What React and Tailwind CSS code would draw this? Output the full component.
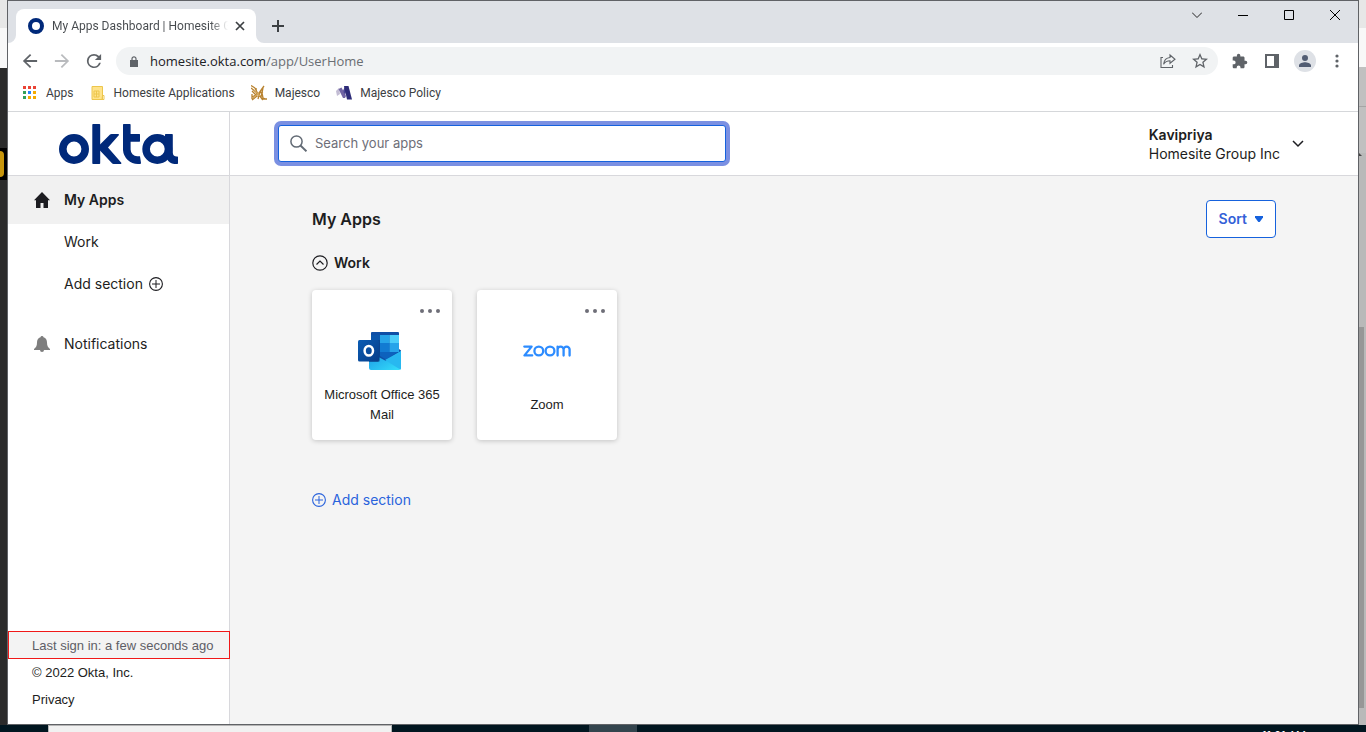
import React from 'react';

const chromeFont = "font-['Open_Sans','Noto_Sans',sans-serif]";

function OktaLogo() {
  return (
    <svg viewBox="0 0 119 40" className="h-10 w-[119px]" fill="#00297a" role="img" aria-label="Okta">
      <circle cx="15" cy="25" r="11.2" fill="none" stroke="#00297a" strokeWidth="7.6" />
      <rect x="33.3" y="0" width="7.9" height="40" rx="0.8" />
      <path d="M40.5 21 L51 10.6 Q51.7 10 52.6 10 H59.6 L60 11 L49 23.5 L62.5 39 L62 40 H54.5 Q53.5 40 53 39.3 L40.5 26z" />
      <path d="M64.6 0 H71 L71.6 .6 V10 H80.6 L81 10.5 V17.2 L80.5 17.7 H71.6 V25.5 a6.6 6.6 0 0 0 6.6 6.7 H81 L82 39 L81.5 40 H79 A15 15 0 0 1 64 26 V.6z" />
      <circle cx="98.3" cy="25" r="11.2" fill="none" stroke="#00297a" strokeWidth="7.6" />
      <path d="M106 13 V10.6 L106.6 10 H113.2 L113.8 10.6 V28.5 a4 4 0 0 0 4 4 H118.6 L119 33 V39.4 L118.4 40 H116.5 a9 9 0 0 1 -8.5 -5 z" />
    </svg>
  );
}

function OutlookLogo() {
  return (
    <svg viewBox="0 0 48 38" className="h-[38px] w-12" aria-hidden="true">
      <defs>
        <linearGradient id="ol-flap" x1="0" y1="0" x2="1" y2="1">
          <stop offset="0" stopColor="#1a94e4" />
          <stop offset="1" stopColor="#35e0fb" />
        </linearGradient>
        <linearGradient id="ol-tile" x1="0" y1="0" x2="1" y2="1">
          <stop offset="0" stopColor="#0a5cb4" />
          <stop offset="1" stopColor="#083d88" />
        </linearGradient>
      </defs>
      <path d="M14 0 H40 Q41 0 41 1 V17 L43 18.500 V22 L28 31 L13 27 V1 Q13 0 14 0z" fill="#0f4fa6" />
      <path d="M13 3h9v8h-9z" fill="#0a56ad" />
      <path d="M22 3h9.500v8H22z" fill="#27a4e8" />
      <path d="M31.500 3H41v8h-9.500z" fill="#4bcdfa" />
      <path d="M22 11h9.500v9H22z" fill="#127bd2" />
      <path d="M31.500 11H41v9h-9.500z" fill="#26a3ea" />
      <path d="M22 20 H40 L31 25.500 L28 27.500 L22 24z" fill="#0d62bd" />
      <path d="M11 20 L28 29 L43 19 V36 Q43 38 41 38 H13 Q11 38 11 36z" fill="url(#ol-flap)" />
      <path d="M27 28 L43 19 V36 Q43 37 42.300 37.500z" fill="#28b8f0" />
      <path d="M14 8 H22 V28 Q22 30 20 30 H11 V20z" fill="#063878" opacity=".5" />
      <rect x="0" y="8" width="21" height="21.500" rx="1.500" fill="url(#ol-tile)" />
      <ellipse cx="10.800" cy="18.700" rx="4.200" ry="4.800" fill="none" stroke="#fff" strokeWidth="2.500" />
    </svg>
  );
}

function ZoomLogo() {
  return (
    <svg viewBox="0 0 48 12" className="h-3 w-12" fill="none" stroke="#2d8cff" strokeWidth="2.300" strokeLinecap="round" strokeLinejoin="round" role="img" aria-label="Zoom">
      <path d="M1.300 1.600 H8.600 L1.500 10.400 H9.200" />
      <circle cx="15.800" cy="6" r="4.400" />
      <circle cx="27" cy="6" r="4.400" />
      <path d="M34.600 10.600 V4.600 a3 3 0 0 1 6 0 V10.600 M40.600 4.600 a3 3 0 0 1 6 0 V10.600 M34.600 4.600 V1.600" />
    </svg>
  );
}

function PlusCircle({ size }) {
  return (
    <svg viewBox="0 0 14 14" className={size} fill="none" stroke="currentColor" aria-hidden="true">
      <circle cx="7" cy="7" r="6.400" strokeWidth="1.100" />
      <path d="M7 3v8M3 7h8" />
    </svg>
  );
}

function TitleBar() {
  return (
    <div className="flex h-[42px] shrink-0 items-stretch bg-[#dee1e6] pl-2 pt-2">
      <div className="relative flex w-60 items-center rounded-t-lg bg-white pl-3 pr-2">
        <svg viewBox="0 0 8 8" className="absolute -left-2 bottom-0 size-2" aria-hidden="true"><path d="M8 0v8H0a8 8 0 0 0 8-8" fill="#fff" /></svg>
        <svg viewBox="0 0 8 8" className="absolute -right-2 bottom-0 size-2" aria-hidden="true"><path d="M0 0v8h8a8 8 0 0 1-8-8" fill="#fff" /></svg>
        <svg viewBox="0 0 16 16" className="size-4 shrink-0" aria-hidden="true"><circle cx="8" cy="8" r="6" fill="none" stroke="#00297a" strokeWidth="4" /></svg>
        <span className="ml-2 mr-1 flex-1 overflow-hidden whitespace-nowrap bg-linear-to-r from-[#45494d] from-90% to-[#45494d]/0 bg-clip-text font-['Roboto',sans-serif] text-xs text-transparent">My Apps Dashboard | Homesite Group</span>
        <button type="button" aria-label="Close tab" className="flex size-4 items-center justify-center">
          <svg viewBox="0 0 8 8" className="size-2 overflow-visible" stroke="#3c4043" strokeWidth="1.700"><path d="M0 0l8 8M8 0L0 8" /></svg>
        </button>
      </div>
      <button type="button" aria-label="New tab" className="ml-4 flex items-center">
        <svg viewBox="0 0 12 12" className="size-3" stroke="#3c4043" strokeWidth="2"><path d="M6 0v12M0 6h12" /></svg>
      </button>
      <div className="ml-auto flex h-3 items-center gap-9 pr-[18px]">
        <button type="button" aria-label="Search tabs"><svg viewBox="0 0 10 10" className="size-[10px]" fill="none" stroke="#222"><path d="M0 2.500l5 5 5-5" /></svg></button>
        <button type="button" aria-label="Minimize"><svg viewBox="0 0 10 10" className="size-[10px]" shapeRendering="crispEdges"><path d="M0 5h10v1H0z" /></svg></button>
        <button type="button" aria-label="Maximize"><svg viewBox="0 0 10 10" className="size-[10px]" fill="none" stroke="#000"><path d="M.5.5h9v9h-9z" /></svg></button>
        <button type="button" aria-label="Close"><svg viewBox="0 0 10 10" className="size-[10px]" stroke="#000"><path d="M0 0l10 10M10 0L0 10" /></svg></button>
      </div>
    </div>
  );
}

function Toolbar() {
  return (
    <div className="flex h-9 shrink-0 items-center bg-white pl-[14px] pr-[14px]">
      <div className="flex items-center gap-4">
        <button type="button" aria-label="Back"><svg viewBox="3 3 18 18" className="size-4" fill="#5f6368"><path d="M20 11H7.830l5.590-5.590L12 4l-8 8 8 8 1.410-1.410L7.830 13H20v-2z" /></svg></button>
        <button type="button" aria-label="Forward"><svg viewBox="3 3 18 18" className="size-4" fill="#b9bbbe"><path d="M12 4l-1.410 1.410L16.170 11H4v2h12.170l-5.580 5.590L12 20l8-8z" /></svg></button>
        <button type="button" aria-label="Reload"><svg viewBox="3 3 18 18" className="size-4" fill="#5f6368"><path d="M17.650 6.350A7.958 7.958 0 0 0 12 4a8 8 0 1 0 7.730 10h-2.080A6 6 0 1 1 12 6c1.660 0 3.140.690 4.220 1.780L13 11h7V4l-2.350 2.350z" /></svg></button>
      </div>
      <div className="ml-[14px] flex h-7 flex-1 items-center rounded-full bg-[#f1f3f4] pl-[14px] pr-[10px]">
        <svg viewBox="0 0 8 11" className="h-[11px] w-2 shrink-0" aria-hidden="true"><path d="M0 4h8v7H0z" fill="#5f6368" /><path d="M2 4.500V2.800a2 2 0 0 1 4 0v1.700" fill="none" stroke="#5f6368" strokeWidth="1.200" /></svg>
        <div className="ml-3 flex-1 text-[13px] leading-5 text-[#202124]">homesite.okta.com<span className="text-[#6a6e73]">/app/UserHome</span></div>
        <div className="flex items-center gap-4">
          <button type="button" aria-label="Share"><svg viewBox="0 0 16 16" className="size-4" fill="none" stroke="#5f6368" strokeWidth="1.100"><path d="M3 4.500H1v10h11.500V12M10 2l5 4.300-5 4V7.800C6.800 7.800 5 9 3.600 11.200 4 7.500 6 4.900 10 4.500z" /></svg></button>
          <button type="button" aria-label="Bookmark"><svg viewBox="2 2 20 20" className="size-4" fill="#5f6368"><path d="M22 9.240l-7.190-.620L12 2 9.190 8.630 2 9.240l5.460 4.730L5.820 21 12 17.270 18.180 21l-1.630-7.030L22 9.240zM12 15.400l-3.760 2.270 1-4.280-3.320-2.880 4.380-.380L12 6.100l1.710 4.040 4.380.380-3.320 2.880 1 4.280L12 15.400z" /></svg></button>
        </div>
      </div>
      <div className="ml-3 flex items-center">
        <button type="button" aria-label="Extensions" className="ml-[2px]"><svg viewBox="1 0 23 23" className="size-4" fill="#5f6368"><path d="M20.500 11H19V7c0-1.100-.9-2-2-2h-4V3.500a2.500 2.500 0 0 0-5 0V5H4c-1.100 0-2 .9-2 2v3.800h1.500a2.700 2.700 0 0 1 0 5.400H2V20c0 1.100.9 2 2 2h3.800v-1.500a2.700 2.700 0 0 1 5.400 0V22H17c1.100 0 2-.9 2-2v-4h1.500a2.500 2.500 0 0 0 0-5z" /></svg></button>
        <button type="button" aria-label="Side panel" className="ml-4"><svg viewBox="0 0 16 16" className="size-4" fill="#5f6368"><path fillRule="evenodd" d="M1 1h14v14H1zM3 3v10h7V3z" /></svg></button>
        <button type="button" aria-label="Profile" className="ml-[14px] flex size-[22px] items-center justify-center rounded-full bg-[#dee1e6]"><svg viewBox="4 4 16 16" className="size-3" fill="#525d73"><path d="M12 12a4 4 0 1 0 0-8 4 4 0 0 0 0 8zm0 1.500c-2.700 0-8 1.400-8 4.200V20h16v-2.300c0-2.800-5.300-4.200-8-4.200z" /></svg></button>
        <button type="button" aria-label="Menu" className="ml-[14px]"><svg viewBox="0 0 14 14" className="size-[14px]" fill="#5f6368"><circle cx="7" cy="2" r="1.600" /><circle cx="7" cy="7" r="1.600" /><circle cx="7" cy="12" r="1.600" /></svg></button>
      </div>
    </div>
  );
}

function Bookmarks() {
  return (
    <nav aria-label="Bookmarks" className="flex h-[33px] shrink-0 items-center border-b border-[#d5d7da] bg-white pb-1 pl-[14px] font-['Roboto',sans-serif] text-xs text-[#3c4043]">
      <a href="#apps" className="flex items-center gap-2">
        <svg viewBox="0 0 16 16" className="size-4" shapeRendering="crispEdges" aria-hidden="true">
          <path d="M1 1h3v3H1zM6 1h3v3H6zM11 1h3v3h-3z" fill="#ea4335" />
          <path d="M1 6h3v3H1zM1 11h3v3H1z" fill="#34a05a" /><path d="M6 6h3v3H6z" fill="#2684fc" />
          <path d="M11 6h3v3h-3zM6 11h3v3H6zM11 11h3v3h-3z" fill="#f5ab00" />
        </svg>
        Apps
      </a>
      <a href="#homesite" className="ml-4 flex items-center gap-2">
        <svg viewBox="0 0 16 16" className="size-4" aria-hidden="true"><path d="M2 1.500h10.500v13H2z" fill="#ffe38a" stroke="#edc64c" /><path d="M4 6h5v6H4zM6.500 6v6M4 9h5M12.500 10.500h1.500v4h-2z" fill="none" stroke="#edc64c" /></svg>
        Homesite Applications
      </a>
      <a href="#majesco" className="ml-4 flex items-center gap-2">
        <svg viewBox="0 0 16 16" className="size-4" fill="none" stroke="#b8822f" strokeWidth="1.300" aria-hidden="true">
          <path d="M0 .5l4 2.500M0 3l6 5M1 6l5 5M5 3l1 9M4 3l3 6M13 1L8 8l4-1M12 3L10 12M7 9l-6 3M6 11l-5 4M1 9v5M7 8l4 6h5M8 10l4 5M11 8l1 5 3 1M9 7l-2 7" />
          <path d="M3 5l6 6M2 13l6-5" stroke="#d3a65c" />
        </svg>
        Majesco
      </a>
      <a href="#policy" className="ml-4 flex items-center gap-2">
        <svg viewBox="0 0 16 16" className="size-4" aria-hidden="true"><path d="M0 6l3-3 1 6-3 2z" fill="#c3bdd4" /><path d="M2.500 4l3-1.500L10 11l-1 2H7z" fill="#7266a4" /><path d="M9 1h3l-3 9-2-4z" fill="#4b4592" /><path d="M8 1h4.500L16 14.500h-5z" fill="#2e2c78" /></svg>
        Majesco Policy
      </a>
    </nav>
  );
}

function Sidebar() {
  return (
    <aside className="flex w-[222px] shrink-0 flex-col border-r border-[#d8d8dc] bg-white text-sm text-[#1d1d21]">
      <div className="flex h-16 shrink-0 items-center justify-center border-b border-[#d8d8dc]"><a href="#home"><OktaLogo /></a></div>
      <nav aria-label="Main" className="flex flex-col">
        <a href="#my-apps" className="flex h-12 items-center gap-[14px] bg-[#f1f1f1] pl-[26px] font-semibold">
          <svg viewBox="0 0 16 16" className="size-4" fill="#1d1d21" aria-hidden="true"><path d="M8 0l8 8.200h-2V16H9.500v-5h-3v5H2V8.200H0z" /></svg>
          My Apps
        </a>
        <a href="#work" className="flex h-9 items-center pl-14">Work</a>
        <button type="button" className="mt-[6px] flex h-9 items-center gap-[6px] pl-14">Add section <PlusCircle size="size-[14px]" /></button>
        <a href="#notifications" className="mt-[18px] flex h-12 items-center gap-[14px] pl-[26px]">
          <svg viewBox="0 0 16 16" className="size-4" fill="#7e7e7e" aria-hidden="true"><path d="M8 0a1.500 1.500 0 0 1 1.500 1.300C12 2 13 4 13 6.500c0 3.500 1 5 3 6.500v1H10a2 2 0 0 1-4 0H0v-1c2-1.500 3-3 3-6.500C3 4 4 2 6.500 1.300A1.500 1.500 0 0 1 8 0z" /></svg>
          Notifications
        </a>
      </nav>
      <footer className="mt-auto flex flex-col pb-[10px] font-['Liberation_Sans',sans-serif] text-[13px]">
        <div className="-mr-px flex h-7 items-center border border-[#f01818] bg-[#f3f3f3] pl-[23px] pt-[2px] text-[#5e5e66]">Last sign in: a few seconds ago</div>
        <div className="flex h-7 items-center pl-6">© 2022 Okta, Inc.</div>
        <a href="#privacy" className="flex h-[27px] items-center pl-6">Privacy</a>
      </footer>
    </aside>
  );
}

function AppCard({ name, children }) {
  return (
    <article className="flex h-[150px] w-[140px] flex-col items-center rounded bg-white px-2 pt-[14px] shadow-[0_1px_5px_rgba(0,0,0,0.2)]">
      <button type="button" aria-label={`${name} options`} className="mr-1 self-end">
        <svg viewBox="0 0 20 14" className="h-[14px] w-5" fill="#6e6e78"><circle cx="2" cy="7" r="2" /><circle cx="10" cy="7" r="2" /><circle cx="18" cy="7" r="2" /></svg>
      </button>
      <div className="mt-[11px] flex h-11 items-center justify-center">{children}</div>
      <h3 className="mt-[11px] flex h-[42px] items-center text-center font-['Liberation_Sans',sans-serif] text-[13px] leading-5 text-[#1d1d21]">{name}</h3>
    </article>
  );
}

function Content() {
  return (
    <main className="flex-1 bg-[#f4f4f4] px-[82px] pt-6 text-[#1d1d21]">
      <div className="flex items-center justify-between">
        <h1 className="text-base font-semibold">My Apps</h1>
        <button type="button" className="flex h-[38px] items-center gap-2 rounded border border-[#1662dd] bg-white px-3 text-sm font-semibold text-[#3361d8]">
          Sort
          <svg viewBox="0 0 8 6" className="h-[6px] w-2" fill="#1662dd" aria-hidden="true"><path d="M0 0h8v1.500L4.700 6H3.300L0 1.500z" /></svg>
        </button>
      </div>
      <button type="button" className="mt-[15px] flex h-5 items-center gap-[6px] text-sm font-semibold">
        <svg viewBox="0 0 16 16" className="size-4" fill="none" stroke="#1d1d21" strokeWidth="1.200" aria-hidden="true"><circle cx="8" cy="8" r="7.200" /><path d="M4.500 9.500L8 6l3.500 3.500" /></svg>
        Work
      </button>
      <section aria-label="Work" className="mt-[17px] flex flex-wrap gap-[25px]">
        <AppCard name="Microsoft Office 365 Mail"><OutlookLogo /></AppCard>
        <AppCard name="Zoom"><ZoomLogo /></AppCard>
      </section>
      <button type="button" className="mt-[50px] flex h-5 items-center gap-[6px] text-sm text-[#2a63dc]"><PlusCircle size="size-[14px]" />Add section</button>
    </main>
  );
}

function Header() {
  return (
    <header className="flex h-16 shrink-0 items-center border-b border-[#d8d8dc] bg-white pl-12 pr-[54px]">
      <label className="flex h-[37px] w-[448px] items-center rounded-[3px] border border-[#1662dd] bg-white pl-[11px] ring-4 ring-[#7b90e2]">
        <svg viewBox="0 0 17 17" className="size-[17px] shrink-0" fill="none" stroke="#636b75" strokeWidth="1.500" aria-hidden="true"><circle cx="6.500" cy="6.500" r="5.600" /><path d="M10.500 10.500l6 5.800" strokeWidth="2" /></svg>
        <input type="search" aria-label="Search your apps" placeholder="Search your apps" className="ml-2 w-full text-[13px] outline-none placeholder:text-[#6e6e78]" />
      </label>
      <button type="button" className="ml-auto flex items-center gap-3 text-left text-sm leading-[19px] text-[#1d1d21]">
        <span><span className="block font-semibold">Kavipriya</span>Homesite Group Inc</span>
        <svg viewBox="0 0 12 12" className="size-3" fill="none" stroke="#1d1d21" strokeWidth="1.500" aria-hidden="true"><path d="M1 3l5 5 5-5" /></svg>
      </button>
    </header>
  );
}

export default function App() {
  return (
    <div className="flex h-screen flex-col overflow-hidden font-['Inter',sans-serif]">
      <div className="flex min-h-0 flex-1">
        <div className="flex w-[7px] shrink-0 flex-col bg-[#2b2b2b]" aria-hidden="true">
          <div className="h-7 bg-[#e7e7e7]" />
          <div className="h-10 bg-[#f8f8f8]" />
          <div className="mt-20 h-8 bg-black py-[3px]"><div className="h-full w-1 rounded-r-sm bg-[#c8960c]" /></div>
        </div>
        <div className="flex min-w-0 flex-1 flex-col border border-[#606266]">
          <div className={chromeFont}>
            <TitleBar />
            <Toolbar />
            <Bookmarks />
          </div>
          <div className="flex min-h-0 flex-1">
            <Sidebar />
            <div className="flex min-w-0 flex-1 flex-col">
              <Header />
              <Content />
            </div>
          </div>
        </div>
        <div className="flex w-[7px] shrink-0 flex-col bg-[#b9b9b9]" aria-hidden="true">
          <div className="h-7 bg-[#e7e7e7]" />
          <div className="h-[39px] bg-[#f8f8f8]" />
          <div className="h-10 border-b border-[#a5a5a5] bg-[#c0c0c0]" />
          <div className="h-[46px] bg-[#c0c0c0]" />
          <svg viewBox="0 0 3 3" className="size-[3px]"><path d="M0 0l3 3H0z" fill="#444" /></svg>
          <div className="mb-[17px] mt-[171px] w-[5px] flex-1 bg-[#979797]" />
        </div>
      </div>
      <div className="flex h-[7px] shrink-0 justify-between overflow-hidden bg-[#011620]">
        <div className="ml-12 h-full w-[344px] border border-b-0 border-[#b5b5b5] bg-[#f1f1f1]" />
        <div className="ml-[197px] mr-auto h-full w-12 bg-[#33444d]" />
        <div className="mr-[60px] pt-1 text-[11px] leading-3 text-white">11:21 AM</div>
      </div>
    </div>
  );
}
